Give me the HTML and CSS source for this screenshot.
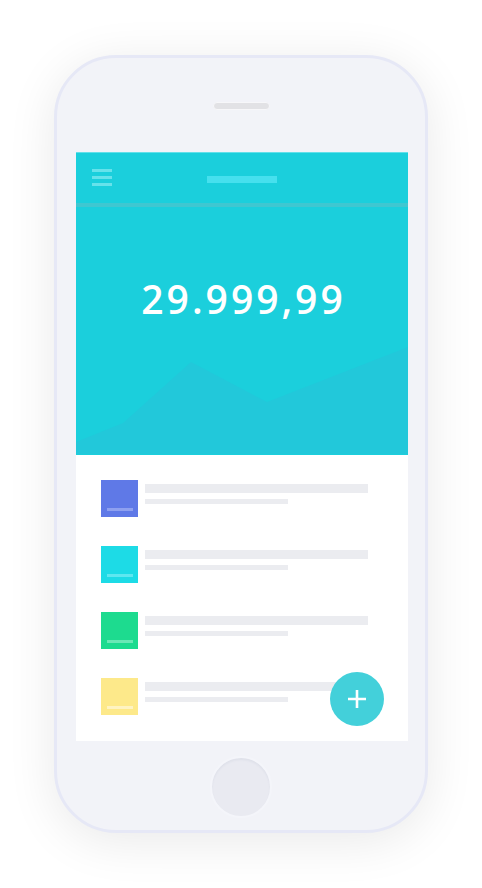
FILE: index.html
```html
<!DOCTYPE html>
<html>
<head>
<meta charset="utf-8">
<link rel="stylesheet" href="styles.css">
</head>
<body>
<div class="phone">
  <div class="speaker"></div>
  <div class="screen">
    <div class="header">
      <div class="nav">
        <div class="burger"><span></span><span></span><span></span></div>
        <div class="title-bar"></div>
        <div></div>
      </div>
      <div class="divider"></div>
      <div class="hero">
        <div class="amount">29.999,99</div>
        <svg class="chart" viewBox="0 0 332 107" preserveAspectRatio="none">
          <polygon points="0,95 47,76 115,15 191,55 332,0 332,107 0,107" fill="#22c8da"/>
        </svg>
      </div>
    </div>
    <div class="list">
      <div class="item">
        <div class="thumb blue"><span></span></div>
        <div class="lines"><div class="line-long"></div><div class="line-short"></div></div>
      </div>
      <div class="item">
        <div class="thumb cyan"><span></span></div>
        <div class="lines"><div class="line-long"></div><div class="line-short"></div></div>
      </div>
      <div class="item">
        <div class="thumb green"><span></span></div>
        <div class="lines"><div class="line-long"></div><div class="line-short"></div></div>
      </div>
      <div class="item">
        <div class="thumb yellow"><span></span></div>
        <div class="lines"><div class="line-long"></div><div class="line-short"></div></div>
      </div>
    </div>
    <div class="fab">
      <svg width="20" height="20" viewBox="0 0 20 20"><path d="M10 1V19M1 10H19" stroke="#fff" stroke-width="2.6"/></svg>
    </div>
  </div>
  <div class="home"></div>
</div>
</body>
</html>
```
FILE: styles.css
```css
html, body {
  margin: 0;
  padding: 0;
  background: #ffffff;
}
body {
  width: 482px;
  height: 888px;
  overflow: hidden;
  font-family: "Open Sans", Lato, sans-serif;
}
.phone {
  box-sizing: border-box;
  width: 374px;
  height: 778px;
  margin: 55px 0 0 54px;
  border: 3px solid #e6e8f6;
  border-radius: 62px;
  background: #f2f3f8;
  box-shadow: 0 8px 50px rgba(0, 0, 0, 0.09);
  display: flex;
  flex-direction: column;
  align-items: center;
}
.speaker {
  box-sizing: border-box;
  margin-top: 44px;
  width: 57px;
  height: 8px;
  border-radius: 4px;
  background: #e2e2e5;
  border: 1px solid #f7f7f9;
}
.screen {
  position: relative;
  margin-top: 42px;
  margin-left: 2px;
  width: 332px;
  height: 589px;
  background: #ffffff;
  display: flex;
  flex-direction: column;
}
.header {
  background: #1bcfdc;
  border-top: 1px solid #62e0ea;
  height: 302px;
  display: flex;
  flex-direction: column;
}
.nav {
  height: 50px;
  display: grid;
  grid-template-columns: 1fr auto 1fr;
  align-items: start;
}
.burger {
  margin: 16px 0 0 16px;
  width: 20px;
  display: flex;
  flex-direction: column;
  gap: 4px;
}
.burger span {
  display: block;
  height: 3px;
  background: #66e2eb;
}
.title-bar {
  margin-top: 23px;
  width: 70px;
  height: 7px;
  background: #46e0ee;
}
.divider {
  height: 4px;
  background: #3fc7d1;
}
.hero {
  flex: 1;
  display: flex;
  flex-direction: column;
}
.amount {
  height: 140px;
  box-sizing: border-box;
  padding-top: 72px;
  text-align: center;
  color: #ffffff;
  font-size: 39px;
  font-weight: 600;
  line-height: 40px;
  letter-spacing: 3px;
  text-indent: 3px;
}
.chart {
  display: block;
  width: 332px;
  height: 107px;
}
.list {
  padding: 25px 0 0 25px;
  display: flex;
  flex-direction: column;
  gap: 29px;
}
.item {
  display: flex;
  align-items: flex-start;
}
.thumb {
  width: 37px;
  height: 37px;
  display: flex;
  justify-content: center;
  align-items: flex-end;
}
.thumb span {
  display: block;
  width: 26px;
  height: 3px;
  margin-bottom: 6px;
}
.blue { background: #5f79e7; }
.blue span { background: #8ea0f0; }
.cyan { background: #1ddbe6; }
.cyan span { background: #5ee7f0; }
.green { background: #1ddb8f; }
.green span { background: #6ae8b6; }
.yellow { background: #fde98a; }
.yellow span { background: #fef3c2; }
.lines {
  margin: 4px 0 0 7px;
  display: flex;
  flex-direction: column;
  gap: 6px;
}
.line-long {
  width: 223px;
  height: 9px;
  background: #ebecf0;
}
.line-short {
  width: 143px;
  height: 5px;
  background: #ebecf0;
}
.fab {
  position: absolute;
  right: 24px;
  bottom: 15px;
  width: 54px;
  height: 54px;
  border-radius: 50%;
  background: #43d0da;
  display: flex;
  align-items: center;
  justify-content: center;
}
.home {
  box-sizing: border-box;
  margin-top: 15px;
  width: 62px;
  height: 62px;
  border-radius: 50%;
  background: #e9eaf1;
  border: 2px solid #f4f5fa;
  box-shadow: inset 0 2px 2px rgba(120, 125, 160, 0.08);
}
```
